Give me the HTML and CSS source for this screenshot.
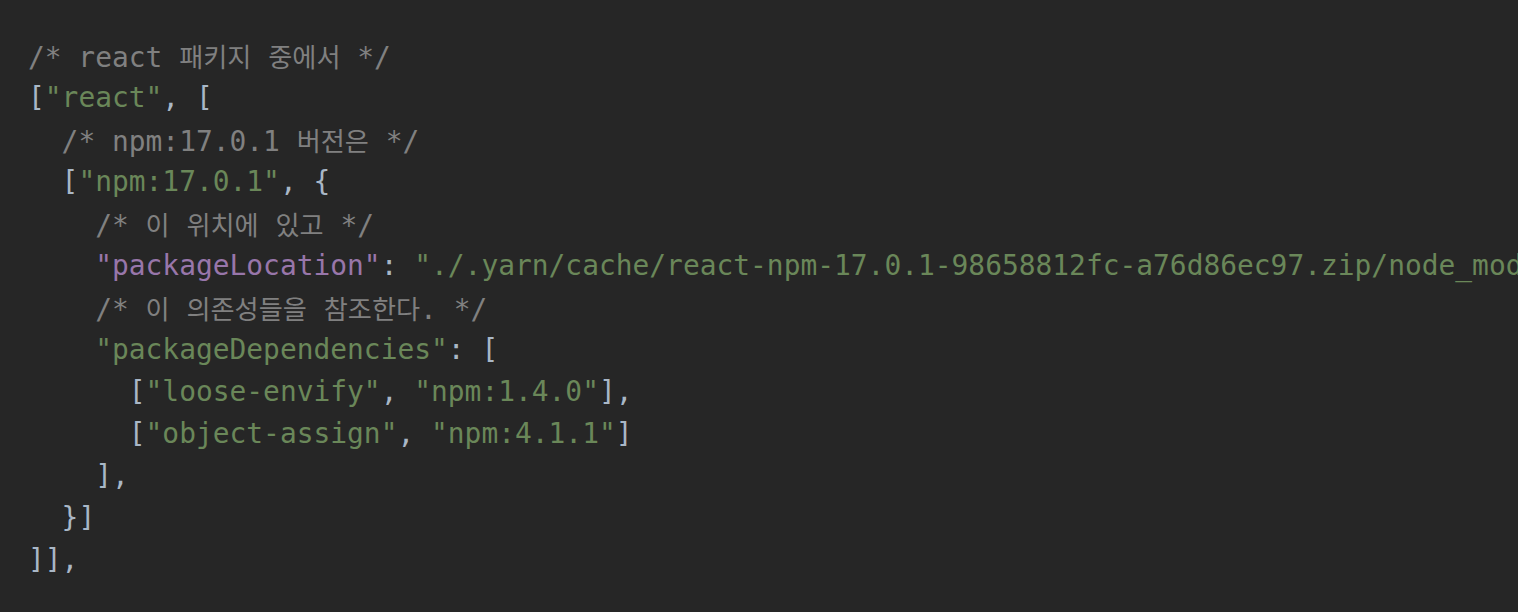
FILE: index.html
```html
<!DOCTYPE html>
<html lang="ko">
<head>
<meta charset="utf-8">
<title>code</title>
<link rel="stylesheet" href="styles.css">
</head>
<body>
<div class="editor">
<div class="line"><span class="c">/* react <span class="ko">패키지</span> <span class="ko">중에서</span> */</span></div>
<div class="line"><span class="p">[</span><span class="s">"react"</span><span class="p">, [</span></div>
<div class="line">  <span class="c">/* npm:17.0.1 <span class="ko">버전은</span> */</span></div>
<div class="line">  <span class="p">[</span><span class="s">"npm:17.0.1"</span><span class="p">, {</span></div>
<div class="line">    <span class="c">/* <span class="ko">이</span> <span class="ko">위치에</span> <span class="ko">있고</span> */</span></div>
<div class="line">    <span class="k">"packageLocation"</span><span class="p">: </span><span class="s">"./.yarn/cache/react-npm-17.0.1-98658812fc-a76d86ec97.zip/node_modules/react/"</span><span class="p">,</span></div>
<div class="line">    <span class="c">/* <span class="ko">이</span> <span class="ko">의존성들을</span> <span class="ko">참조한다</span>. */</span></div>
<div class="line">    <span class="s">"packageDependencies"</span><span class="p">: [</span></div>
<div class="line">      <span class="p">[</span><span class="s">"loose-envify"</span><span class="p">, </span><span class="s">"npm:1.4.0"</span><span class="p">],</span></div>
<div class="line">      <span class="p">[</span><span class="s">"object-assign"</span><span class="p">, </span><span class="s">"npm:4.1.1"</span><span class="p">]</span></div>
<div class="line">    <span class="p">],</span></div>
<div class="line">  <span class="p">}]</span></div>
<div class="line"><span class="p">]],</span></div>
</div>
</body>
</html>
```

FILE: styles.css
```css
html, body {
  margin: 0;
  padding: 0;
  background: #262626;
  height: 100%;
  overflow: hidden;
}

.editor {
  padding: 35px 0 0 28px;
  font-family: "DejaVu Sans Mono", "Liberation Mono", monospace;
  font-size: 27.9px;
  line-height: 42px;
  color: #a9b7c6;
  overflow: hidden;
}

.line {
  height: 42px;
  white-space: pre;
}

.c { color: #808080; }
.p { color: #a9b7c6; }
.s { color: #6a8759; }
.k { color: #9876aa; }

.ko {
  font-family: "Noto Sans CJK KR", "DejaVu Sans", sans-serif;
  font-size: 26.2px;
  color: #808080;
}
```
